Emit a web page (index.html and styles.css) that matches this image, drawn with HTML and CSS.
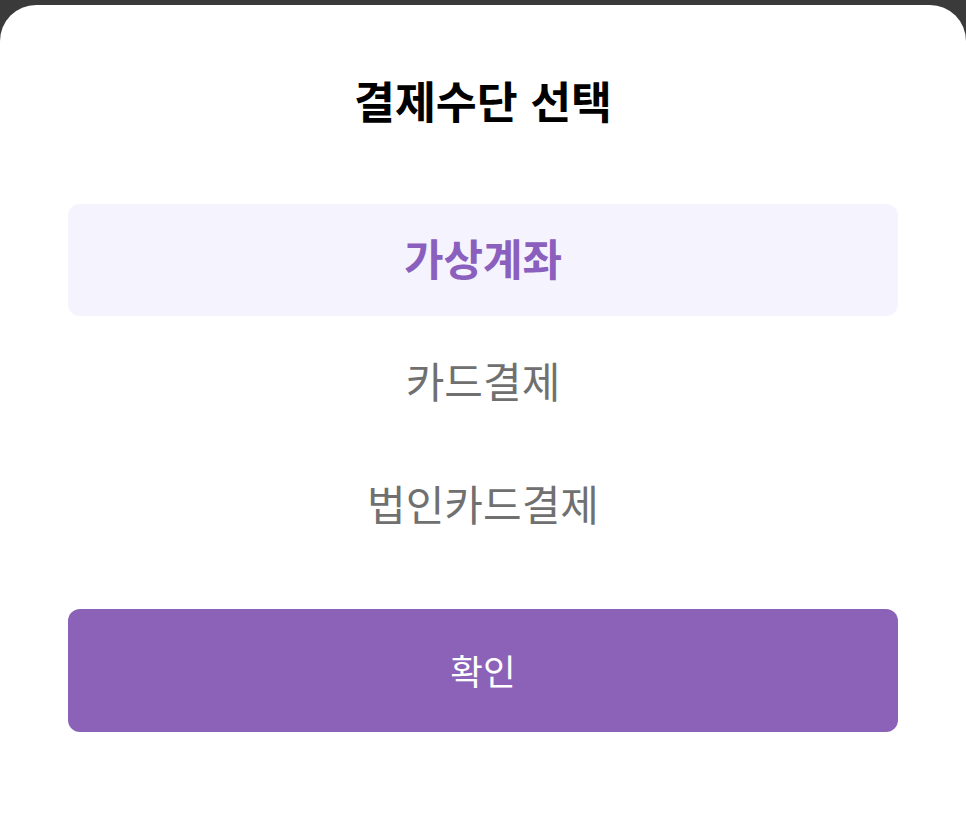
FILE: index.html
```html
<!DOCTYPE html>
<html lang="ko">
<head>
<meta charset="utf-8">
<link rel="stylesheet" href="styles.css">
</head>
<body>
<div class="sheet">
  <h1 class="title">결제수단 선택</h1>
  <ul class="options">
    <li class="option selected">가상계좌</li>
    <li class="option">카드결제</li>
    <li class="option">법인카드결제</li>
  </ul>
  <button class="confirm">확인</button>
</div>
</body>
</html>
```
FILE: styles.css
```css
html, body {
  margin: 0;
  padding: 0;
  height: 100%;
}
body {
  background: #3a3a3a;
  font-family: "Noto Sans CJK KR", "Noto Sans", sans-serif;
  padding-top: 5px;
  box-sizing: border-box;
}
.sheet {
  background: #ffffff;
  border-radius: 36px 36px 0 0;
  height: 813px;
  padding: 0 68px;
  box-sizing: border-box;
  display: flex;
  flex-direction: column;
}
.title {
  margin: 0;
  padding-top: 67px;
  height: 56px;
  line-height: 56px;
  text-align: center;
  font-size: 44.5px;
  font-weight: 700;
  color: #000000;
}
.options {
  list-style: none;
  margin: 76px 0 0;
  padding: 0;
  display: flex;
  flex-direction: column;
  gap: 11px;
}
.option {
  height: 112px;
  box-sizing: border-box;
  padding-bottom: 7px;
  display: flex;
  align-items: center;
  justify-content: center;
  font-size: 42px;
  color: #707070;
  border-radius: 12px;
}
.option.selected {
  background: #f5f4fe;
  color: #8a5fbd;
  font-size: 43px;
  font-weight: 600;
}
.confirm {
  margin-top: 47px;
  height: 123px;
  padding-bottom: 4px;
  border: none;
  border-radius: 12px;
  background: #8c62b9;
  color: #ffffff;
  font-family: inherit;
  font-size: 35.5px;
  font-weight: 400;
}
```
